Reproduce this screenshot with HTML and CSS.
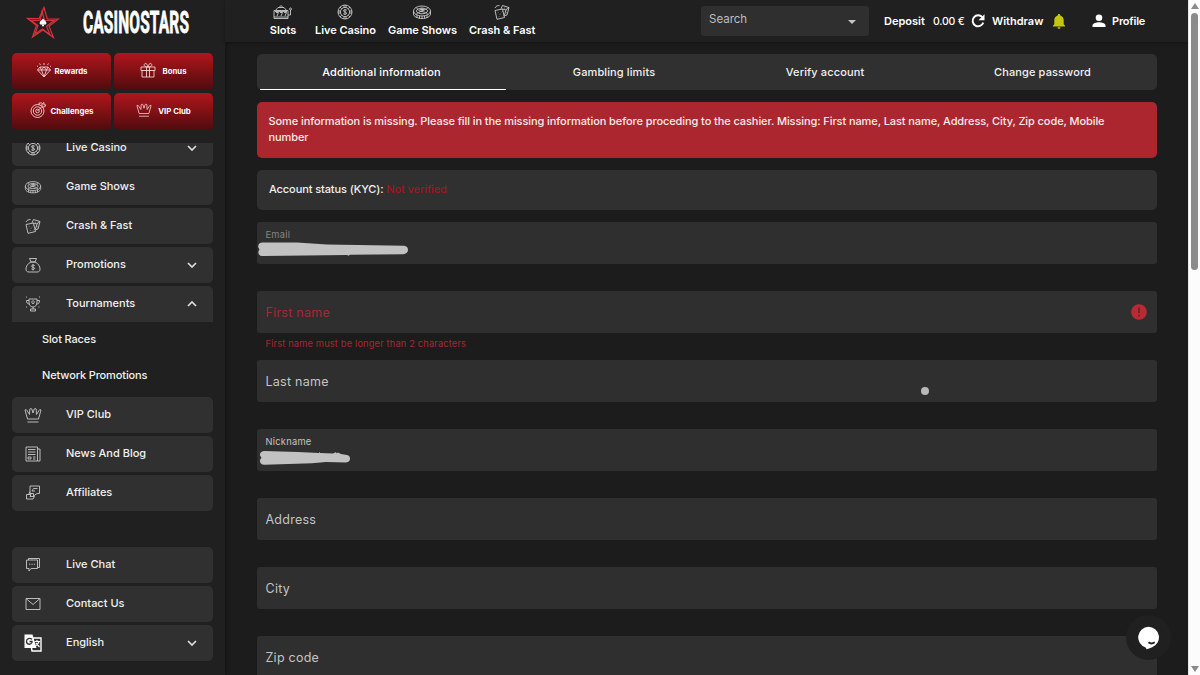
FILE: index.html
```html
<!DOCTYPE html>
<html lang="en">
  <head>
    <meta charset="UTF-8" />
    <meta name="viewport" content="width=device-width, initial-scale=1.0" />
    <title>CasinoStars - Profile</title>
    <link rel="stylesheet" href="styles.css">
  </head>
  <body>
    <!-- shared icons -->
    <svg class="sprite" width="0" height="0">
      <symbol id="i-slots" viewBox="0 0 20 16">
        <path d="M1 6.500h14v8H1zM2.500 6.500L5 3.500h6l2.500 3M6 3.500l2-2 2 2M15 11h2.500V6M3 8.500h2.500L4 12M7 8.500h2.500L8 12M11 8.500h2.500L12 12M1 13h14M2 7.500h12" />
        <circle cx="17.500" cy="5" r="1" />
      </symbol>
      <symbol id="i-chip" viewBox="0 0 16 16">
        <circle cx="8" cy="8" r="7" />
        <circle cx="8" cy="8" r="4.600" />
        <path d="M7 1v2.400M9 1v2.400M7 12.600V15M9 12.600V15M1 7h2.400M1 9h2.400M12.600 7H15M12.600 9H15M3 3l1.700 1.700M11.300 11.300L13 13M13 3l-1.700 1.700M3 13l1.700-1.700M9.700 6.300C8.500 5.300 6.300 5.700 6.500 7s3 .800 3.100 2.100-2 1.700-3.300.600M8 5v6" />
      </symbol>
      <symbol id="i-roulette" viewBox="0 0 20 16">
        <ellipse cx="10" cy="7" rx="8.500" ry="5" />
        <ellipse cx="10" cy="7" rx="5.500" ry="2.800" />
        <path d="M1.500 7v3c0 2.500 4 4.500 8.500 4.500s8.500-2 8.500-4.500V7M10 3.500V8M7.500 5.500h5M6.500 6.500l7 2M13.500 5.500l-7 3M4 3.500l2 2M16 3.500l-2 2M4 10.500l2-2M16 10.500l-2-2M5 11v3M7.500 12v2.500M10 12v2.500M12.500 12v2.500M15 11v3" />
      </symbol>
      <symbol id="i-dice" viewBox="0 0 16 16">
        <path d="M1 6.500l7.500-1.500 2 8.500-7.500 1.800zM7 4.800L8.500 1.500l6.500 2-2 7.500-2.800.800M1 4c1-2 2.500-2.500 4.500-2.500M8.500 5L12 6l3-2.500M12 6l-1.500 5" />
        <path d="M4 8.500l.300.200M8 7.700l.300.200M6 10.200l.300.200M5 12.500l.300.200M9 11.700l.300.200M10.500 4l.400.200M12.700 4l.3.200M12.500 8.500l.3.200" stroke-width="1.500" />
      </symbol>
      <symbol id="i-bag" viewBox="0 0 16 16">
        <path d="M4.500 1.500h7L10 5H6zM6 5C2.500 6.500 1 9.500 1 12c0 2 1 3 3 3h8c2 0 3-1 3-3 0-2.500-1.500-5.500-5-7zM9.700 8.600C9 7.800 6.500 7.900 6.500 9.200c0 1.400 3.200.700 3.200 2.100 0 1.300-2.500 1.400-3.300.500M8 7v6.500" />
      </symbol>
      <symbol id="i-trophy" viewBox="0 0 16 16">
        <path d="M4 3h8v3c0 3-1.500 5-4 5S4 9 4 6zM4 4.500H1.500C1.500 7 2.500 8 4.500 8M12 4.500h2.500C14.500 7 13.500 8 11.500 8M8 11v2M5.500 15h5v-2h-5zM6.500 6l1.500-1.500L9.500 6 8 8zM1 1h1M14 1h1M1 11h1M13.500 11h1" />
      </symbol>
      <symbol id="i-crown" viewBox="0 0 18 16">
        <path d="M3.500 12L1 3q1.500-1 2 .500l2.500 4L5.800 2q1.200-1.200 2 0L9 6l1.200-4q.8-1.200 2 0l.3 5.500 2.500-4q.5-1.500 2-.5l-2.500 9zM3.500 15h11" />
      </symbol>
      <symbol id="i-news" viewBox="0 0 16 16">
        <path d="M1 1h11.500v14H1zM12.500 3H15v12h-2.500M3 3.500h7.500M3 6h7.500M3 8.500h7.500M3 11h3v2H3zM8 11h2.500M8 13h2.500" />
      </symbol>
      <symbol id="i-affiliate" viewBox="0 0 16 16">
        <path d="M5 1h9.500v7.500H12L8.500 11V8.500H5zM12.500 3.500h-4L7 6h3M5 6.500L3.500 10M1.500 9.500H6l-1 2h4.500L8 14H1.500z" />
      </symbol>
      <symbol id="i-chat" viewBox="0 0 16 16">
        <path d="M1.500 3h11v8.500H6L4 14v-2.500H1.500zM3.500 3V1.500H14.500v9h-2M4 7.200h1.300M6.400 7.200h1.300M8.800 7.200h1.300" />
      </symbol>
      <symbol id="i-mail" viewBox="0 0 16 16">
        <path d="M1 2.500h14v11H1zM1 2.500l7 6 7-6" />
      </symbol>
      <symbol id="i-diamond" viewBox="0 0 16 16">
        <path d="M4 5h8l2.500 3L8 15 1.500 8zM1.500 8h13M4 5l1.500 3L8 15l2.500-7L12 5M5.500 8L8 5l2.500 3M8 1v2M3.500 1.500l1 1.500M12.500 1.500l-1 1.500M1 4l1 .500M15 4l-1 .500" />
      </symbol>
      <symbol id="i-gift" viewBox="0 0 16 16">
        <path d="M1 5h14v3.500H1zM2 8.500h12V15H2zM6.500 5v10M9.500 5v10M8 5C5 5 3.500 3.500 4.500 2S7.500 2 8 5c.500-3 2.500-4.500 3.500-3S11 5 8 5" />
      </symbol>
      <symbol id="i-target" viewBox="0 0 16 16">
        <circle cx="7.500" cy="9" r="6.500" />
        <circle cx="7.500" cy="9" r="4.200" />
        <circle cx="7.500" cy="9" r="1.800" />
        <path d="M7.500 9L12 4.500V2l2-1.500v2.500H16L14.500 5H12M9 3V1h3" />
      </symbol>
      <symbol id="i-down" viewBox="0 0 10 6">
        <path d="M1 1l4 4 4-4" />
      </symbol>
    </svg>

    <aside class="sidebar">
      <div class="logo">
        <svg class="logo-star" viewBox="0 0 34 34" fill="none" stroke="#d8323c" stroke-width="1.200">
          <path d="M18 1.500l3.300 11.300 11.200.200-9.500 7.200 4.500 11.300-10.500-7.500-10.500 7 4-11.500L1.500 12.400l11.600.200z" />
          <path d="M16 5.500l2.700 9 9.800-.300-8 6 3.500 8.600-7.500-5.700-7.500 5 3-8.700-7-5 9 .100z" />
          <path d="M17 12.500c1 1.800 3.400 2.700 3.400 4.500 0 1.800-2.100 2.200-2.900 1l.7 2.200h-2.400l.7-2.200c-.8 1.200-2.900.8-2.900-1 0-1.800 2.400-2.700 3.400-4.500z" fill="#fff" stroke="none" />
        </svg>
        <svg class="logo-name" viewBox="0 0 108 26">
          <text x="2" y="24" transform="scale(0.5 1)" textLength="212">CASINOSTARS</text>
        </svg>
      </div>

      <div class="promo">
        <a class="promo-btn"><svg class="icon"><use href="#i-diamond" /></svg><span>Rewards</span></a>
        <a class="promo-btn bonus"><svg class="icon"><use href="#i-gift" /></svg><span>Bonus</span></a>
        <a class="promo-btn"><svg class="icon"><use href="#i-target" /></svg><span>Challenges</span></a>
        <a class="promo-btn vip"><svg class="icon"><use href="#i-crown" /></svg><span>VIP Club</span></a>
      </div>

      <nav class="menu">
        <a class="menu-item"><svg class="icon"><use href="#i-chip" /></svg><span>Live Casino</span><svg class="chevron"><use href="#i-down" /></svg></a>
        <a class="menu-item"><svg class="icon"><use href="#i-roulette" /></svg><span>Game Shows</span></a>
        <a class="menu-item"><svg class="icon"><use href="#i-dice" /></svg><span>Crash &amp; Fast</span></a>
        <a class="menu-item"><svg class="icon"><use href="#i-bag" /></svg><span>Promotions</span><svg class="chevron"><use href="#i-down" /></svg></a>
        <a class="menu-item open"><svg class="icon"><use href="#i-trophy" /></svg><span>Tournaments</span><svg class="chevron"><use href="#i-down" /></svg></a>
        <div class="submenu">
          <a>Slot Races</a>
          <a>Network Promotions</a>
        </div>
        <a class="menu-item"><svg class="icon"><use href="#i-crown" /></svg><span>VIP Club</span></a>
        <a class="menu-item"><svg class="icon"><use href="#i-news" /></svg><span>News And Blog</span></a>
        <a class="menu-item"><svg class="icon"><use href="#i-affiliate" /></svg><span>Affiliates</span></a>
        <a class="menu-item support"><svg class="icon"><use href="#i-chat" /></svg><span>Live Chat</span></a>
        <a class="menu-item"><svg class="icon"><use href="#i-mail" /></svg><span>Contact Us</span></a>
        <a class="menu-item lang">
          <svg class="icon" viewBox="0 0 18 18">
            <path d="M6 4h11v13H8z" fill="#303030" stroke="#fff" stroke-width="1.400" />
            <path d="M.5.500h8L12.500 14H.5z" fill="#fff" stroke="none" />
            <path d="M8 5.400C6 3.500 2.500 4.500 2.500 7.500S6.500 11.300 8 8.500V7.500H5.500" stroke="#303030" stroke-width="1.300" />
            <path d="M10.500 7.500H16M13 6v1.500M15 7.500c-.5 2-2 3.500-3.500 4.500M12 9l3.500 4" stroke="#fff" stroke-width="1.200" />
          </svg>
          <span>English</span><svg class="chevron"><use href="#i-down" /></svg>
        </a>
      </nav>
    </aside>

    <div class="page">
      <header class="topbar">
        <nav class="games">
          <a><svg class="icon"><use href="#i-slots" /></svg><span>Slots</span></a>
          <a><svg class="icon"><use href="#i-chip" /></svg><span>Live Casino</span></a>
          <a><svg class="icon"><use href="#i-roulette" /></svg><span>Game Shows</span></a>
          <a><svg class="icon"><use href="#i-dice" /></svg><span>Crash &amp; Fast</span></a>
        </nav>
        <div class="search"><span>Search</span><i class="caret"></i></div>
        <div class="account">
          <a class="deposit">Deposit</a>
          <span class="balance">0.00 €</span>
          <svg class="refresh" viewBox="0 0 14 14" fill="none" stroke="#fff" stroke-width="1.900">
            <path d="M11.300 3.200A5.500 5.500 0 1 0 12.300 8.700" />
            <path d="M13.500 0.300v6H7.500z" fill="#fff" stroke="none" />
          </svg>
          <a class="withdraw">Withdraw</a>
          <svg class="bell" viewBox="0 0 14 16" fill="#c3c60c">
            <path d="M7 0c1 0 1.400.700 1.400 1.600C10.700 2.200 12 4 12 6.500V11l1.500 1.500v.7H.5v-.7L2 11V6.500c0-2.500 1.300-4.300 3.600-4.900C5.600.700 6 0 7 0zM5.400 14h3.200c0 1-.700 1.700-1.600 1.700S5.400 15 5.400 14z" />
          </svg>
          <svg class="user" viewBox="0 0 14 14" fill="#fff">
            <circle cx="7" cy="3.800" r="3.300" />
            <path d="M.5 13v-1.500c0-2.200 4-3.300 6.500-3.300s6.500 1.100 6.500 3.300V13z" />
          </svg>
          <a class="profile">Profile</a>
        </div>
      </header>

      <main class="content">
        <div class="tabs">
          <a class="tab active">Additional information</a>
          <a class="tab">Gambling limits</a>
          <a class="tab">Verify account</a>
          <a class="tab">Change password</a>
        </div>

        <div class="alert">Some information is missing. Please fill in the missing information before proceding to the cashier. Missing: First name, Last name, Address, City, Zip code, Mobile<br>number</div>

        <div class="status"><span>Account status (KYC):</span> <span class="not-verified">Not verified</span></div>

        <form class="fields">
          <div class="field filled disabled">
            <label>Email</label>
            <svg class="redacted" viewBox="0 0 152 18">
              <path d="M5 1.500Q1 2 1.200 6l1.300 2.500Q.500 11 2 13.500q1 1.700 4 1.500l84-1 1.500.800 1.500-1 53-.600q5-.700 5-4.200 0-3.700-4-4.200L70 3.600 40 1.500z" />
            </svg>
          </div>
          <div class="field invalid">
            <label>First name</label>
            <svg class="error-icon" viewBox="0 0 16 16">
              <circle cx="8" cy="8" r="7.800" fill="#b92b34" />
              <path d="M8 3.500v5.500M8 10.800v1.700" stroke="#541d21" stroke-width="1.300" />
            </svg>
            <p class="error">First name must be longer than 2 characters</p>
          </div>
          <div class="field"><label>Last name</label></div>
          <div class="field filled">
            <label>Nickname</label>
            <svg class="redacted nick" viewBox="0 0 152 18">
              <path d="M6 2Q1.500 2.500 2 6.500l1.500 2.300Q1 11 2.500 14q1 2 4 1.800L54 14.300 68 13l20 .500q4-.700 4-3.800 0-3-3-3.600L83 5l-3-1.500-1 .800-1.500-1L75 4.500l-13-.400V2.800l-1 1.200L40 3z" />
            </svg>
          </div>
          <div class="field"><label>Address</label></div>
          <div class="field"><label>City</label></div>
          <div class="field"><label>Zip code</label></div>
        </form>
      </main>
    </div>

    <div class="scrollbar">
      <i class="arrow up"></i>
      <i class="thumb"></i>
      <i class="arrow down"></i>
    </div>

    <i class="pointer"></i>
    <div class="chat-bubble">
      <svg viewBox="0 0 24 25">
        <path d="M12 .8a11 11 0 0 1 3.800 21.300c-1.500.700-3.300 1.200-5.800 2.200l-1-2A11 11 0 0 1 12 .8z" fill="#fff" />
        <path d="M12 17q3 2.500 6.500 0" fill="none" stroke="#202020" stroke-width="2" />
      </svg>
    </div>
  </body>
</html>
```
FILE: styles.css
```css
* {
  box-sizing: border-box;
  margin: 0;
  padding: 0;
}

body {
  font-family: Inter, "Open Sans", sans-serif;
  font-size: 11px;
  font-weight: 500;
  background-color: #1c1c1c;
  color: #f0f0f0;
  display: flex;
  height: 675px;
  overflow: hidden;
  white-space: nowrap;
}

.sprite {
  position: absolute;
}

.icon,
.chevron {
  fill: none;
  stroke: #c9c9c9;
  stroke-width: 0.9;
}

/* sidebar */
.sidebar {
  width: 225px;
  flex: none;
  height: 675px;
  padding: 0 12px;
  background-color: #202020;
  box-shadow: 1px 0 4px rgba(0, 0, 0, 0.35);
  display: flex;
  flex-direction: column;
}

.logo {
  display: flex;
  height: 53px;
  padding: 6px 0 0 14px;
}

.logo-star {
  width: 34px;
  height: 34px;
}

.logo-name {
  width: 108px;
  height: 26px;
  margin: 3px 0 0 22px;
  overflow: visible;
}

.logo-name text {
  font-family: Roboto, sans-serif;
  font-weight: 700;
  font-size: 31px;
  fill: #fff;
  stroke: #fff;
  stroke-width: 0.8;
}

.promo {
  display: grid;
  grid-template-columns: 99px 99px;
  gap: 3px;
  height: 90px;
  grid-auto-rows: 37px;
}

.promo-btn {
  display: flex;
  align-items: center;
  justify-content: center;
  gap: 3px;
  padding-bottom: 2px;
  font-size: 7.8px;
  font-weight: 700;
  color: #fff;
  border-radius: 5px;
  background: linear-gradient(#b0161c, #500b0e);
}

.promo-btn .icon {
  width: 16px;
  height: 16px;
  margin-bottom: 2px;
  stroke: #f3cfcf;
}

.promo-btn:nth-child(3) {
  gap: 5px;
}

.promo-btn.bonus,
.promo-btn.vip {
  gap: 6px;
}

.menu {
  height: 532px;
  overflow: hidden;
  display: flex;
  flex-direction: column;
  gap: 3px;
}

.menu-item {
  width: 201px;
  height: 36px;
  flex: none;
  display: flex;
  align-items: center;
  padding: 0 16px 0 12px;
  background-color: #303030;
  border-radius: 5px;
}

.menu-item:first-child {
  margin-top: -13px;
}

.menu-item span {
  padding-bottom: 2px;
}

.menu-item .icon {
  width: 18px;
  height: 16px;
  margin-right: 24px;
}

.menu-item .chevron {
  width: 10px;
  height: 6px;
  margin-left: auto;
  stroke: #ddd;
  stroke-width: 1.7;
}

.menu-item.open {
  border-radius: 5px 5px 0 0;
}

.menu-item.open .chevron {
  transform: rotate(180deg);
}

.submenu {
  margin-top: -3px;
  letter-spacing: -0.13px;
}

.submenu a {
  display: block;
  height: 36px;
  line-height: 35px;
  padding-left: 30px;
}

.support {
  margin-top: 33px;
}

.menu-item.lang .icon {
  height: 18px;
}

/* page */
.page {
  width: 963px;
  flex: none;
}

.topbar {
  height: 42px;
  background-color: #202020;
  box-shadow: 0 1px 3px rgba(0, 0, 0, 0.35);
  display: flex;
}

.games {
  display: flex;
  gap: 12px;
  padding: 4px 0 0 38px;
  width: 476px;
}

.games a {
  min-width: 40px;
  display: flex;
  flex-direction: column;
  align-items: center;
  font-weight: 600;
  line-height: 20px;
  letter-spacing: -0.04px;
  color: #fff;
}

.games .icon {
  width: 20px;
  height: 16px;
}

.search {
  width: 168px;
  height: 30px;
  margin-top: 6px;
  padding: 0 13px 4px 8px;
  background-color: #2f2f2f;
  border-radius: 3px;
  color: #bdbdbd;
  font-weight: 400;
  font-size: 11.5px;
  display: flex;
  align-items: center;
  justify-content: space-between;
}

.caret {
  border: 4px solid transparent;
  border-top-color: #c6c6c6;
  border-bottom: 0;
  margin-top: 5px;
}

.account {
  display: flex;
  align-items: center;
  height: 42px;
  padding-left: 15px;
  font-weight: 600;
  color: #fff;
}

.deposit {
  width: 49px;
}

.balance {
  width: 38px;
  font-weight: 500;
  font-size: 10.5px;
  letter-spacing: -0.2px;
}

.refresh {
  width: 14px;
  height: 14px;
}

.withdraw {
  width: 60px;
  margin-left: 7px;
}

.bell {
  width: 14px;
  height: 15px;
}

.user {
  width: 14px;
  height: 14px;
  margin-left: 26px;
}

.profile {
  margin-left: 6px;
  letter-spacing: -0.2px;
}

.content {
  padding: 12px 0 0 32px;
  width: 932px;
}

.tabs {
  display: grid;
  grid-template-columns: 249px 216px 206px 229px;
  height: 36px;
  background-color: #303030;
  border-radius: 5px;
}

.tab {
  line-height: 36px;
  text-align: center;
  letter-spacing: 0.12px;
}

.tab.active {
  color: #fff;
  background: linear-gradient(#fff, #fff) 3px 34.500px / 246px 1.500px no-repeat;
}

.alert {
  height: 56px;
  margin-top: 12px;
  padding: 12px 11.500px;
  line-height: 15.500px;
  letter-spacing: -0.085px;
  background-color: #ab262e;
  border-radius: 5px;
  color: #fdeaea;
}

.status {
  height: 40px;
  margin-top: 12px;
  padding-left: 12px;
  line-height: 39px;
  letter-spacing: -0.1px;
  background-color: #303030;
  border-radius: 5px;
}

.not-verified {
  color: #a5141e;
}

.fields {
  margin-top: 12px;
  display: grid;
  grid-auto-rows: 42px;
  gap: 27px;
}

.field {
  position: relative;
  display: flex;
  align-items: center;
  padding: 0 10px 0 8.500px;
  background-color: #2f2f2f;
  border-radius: 3px;
  font-size: 12.500px;
  font-weight: 400;
  letter-spacing: 0.25px;
  color: #c4c4c4;
}

.field.filled {
  align-items: flex-start;
  padding-top: 7px;
  font-size: 9.300px;
  line-height: 12px;
}

.field.disabled {
  color: #858585;
}

.field.invalid {
  color: #a52932;
}

.error-icon {
  width: 16px;
  height: 16px;
  margin-left: auto;
}

.error {
  position: absolute;
  left: 8.500px;
  top: 46px;
  font-size: 9.300px;
  line-height: 13px;
  letter-spacing: 0.15px;
}

.redacted {
  position: absolute;
  left: 0;
  top: 19px;
  width: 152px;
  height: 18px;
  fill: #c2c2c2;
}

.redacted.nick {
  left: 1px;
  top: 20px;
}

/* scrollbar */
.scrollbar {
  width: 12px;
  flex: none;
  background-color: #fcfcfc;
  border-left: 1px solid #e8e8e8;
  display: flex;
  flex-direction: column;
  align-items: center;
  padding: 3px 0;
}

.arrow {
  border: 4px solid transparent;
}

.arrow.up {
  border-top: 0;
  border-bottom: 6px solid #8b8b8b;
}

.arrow.down {
  border-bottom: 0;
  border-top: 6px solid #8b8b8b;
  margin-top: auto;
}

.thumb {
  width: 7px;
  height: 257px;
  margin-top: 4px;
  border-radius: 4px;
  background-color: #8b8b8b;
}

/* overlays */
.pointer {
  position: absolute;
  left: 921px;
  top: 387px;
  width: 8px;
  height: 8px;
  border-radius: 50%;
  background-color: #b8b8b8;
}

.chat-bubble {
  position: absolute;
  left: 1126px;
  top: 615px;
  width: 45px;
  height: 45px;
  border-radius: 50%;
  background-color: #202020;
  display: flex;
  align-items: center;
  justify-content: center;
}

.chat-bubble svg {
  width: 23px;
  height: 24px;
}
```
